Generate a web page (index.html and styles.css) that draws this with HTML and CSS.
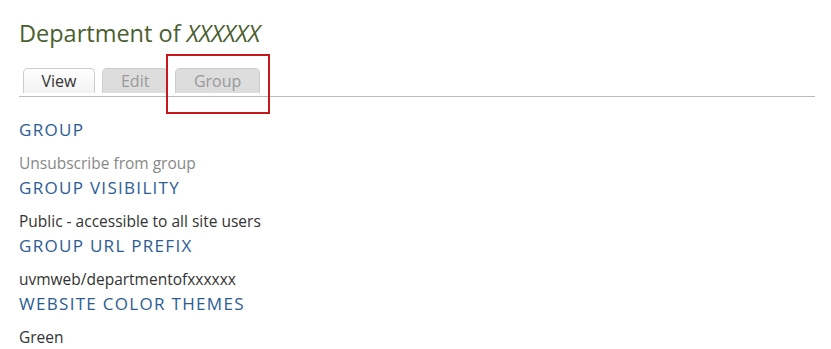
FILE: index.html
```html
<!DOCTYPE html>
<html lang="en">
<head>
    <meta charset="UTF-8">
    <meta name="viewport" content="width=device-width, initial-scale=1.0">
    <title>Department of XXXXXX - Group</title>
    <link rel="stylesheet" href="styles.css">
</head>
<body>
    <div class="main-content">
        <h1 class="page-title">Department of <em>XXXXXX</em></h1>

        <div class="tabs">
            <a href="#" class="tab active">View</a>
            <a href="#" class="tab">Edit</a>
            <a href="#" class="tab">Group</a>
            <span class="highlight-box"></span>
        </div>

        <div class="field">
            <h2>Group</h2>
            <a href="#" class="field-link">Unsubscribe from group</a>
        </div>
        <div class="field">
            <h2>Group visibility</h2>
            <p>Public - accessible to all site users</p>
        </div>
        <div class="field">
            <h2>Group URL prefix</h2>
            <p>uvmweb/departmentofxxxxxx</p>
        </div>
        <div class="field">
            <h2>Website color themes</h2>
            <p>Green</p>
        </div>
    </div>
</body>
</html>
```

FILE: styles.css
```css
* {
    margin: 0;
    padding: 0;
    box-sizing: border-box;
    font-family: "Open Sans", Arial, sans-serif;
}
body {
    background-color: white;
    color: #333;
}
.main-content {
    padding: 17px 16px 0 19px;
}
.page-title {
    font-size: 23.5px;
    font-weight: normal;
    color: #4b5e2f;
    line-height: 32px;
}
.page-title em {
    font-style: italic;
}
.tabs {
    position: relative;
    display: flex;
    gap: 7px;
    margin-top: 19px;
    margin-bottom: 22px;
    padding-left: 4px;
    padding-bottom: 3px;
    border-bottom: 1px solid #bbb;
}
.tab {
    display: block;
    height: 25px;
    line-height: 24px;
    padding: 0 18px 0 17.5px;
    font-size: 16px;
    color: #999;
    text-decoration: none;
    background-color: #ddd;
    border: 1px solid #ccc;
    border-bottom: none;
    border-radius: 5px 5px 0 0;
}
.tab.active {
    color: #333;
    background: linear-gradient(#fff, #f2f2f2);
}
.highlight-box {
    position: absolute;
    left: 147px;
    top: -14px;
    width: 104px;
    height: 60px;
    border: 2px solid #c8161d;
}
.field h2 {
    font-size: 17px;
    font-weight: normal;
    text-transform: uppercase;
    letter-spacing: 1.3px;
    color: #2b5d94;
    line-height: 22px;
    margin-top: 4px;
    margin-bottom: 12px;
}
.field:first-of-type h2 {
    margin-top: 0;
}
.field p,
.field-link {
    display: block;
    font-size: 15.5px;
    line-height: 20px;
}
.field-link {
    color: #888;
    text-decoration: none;
}
```
